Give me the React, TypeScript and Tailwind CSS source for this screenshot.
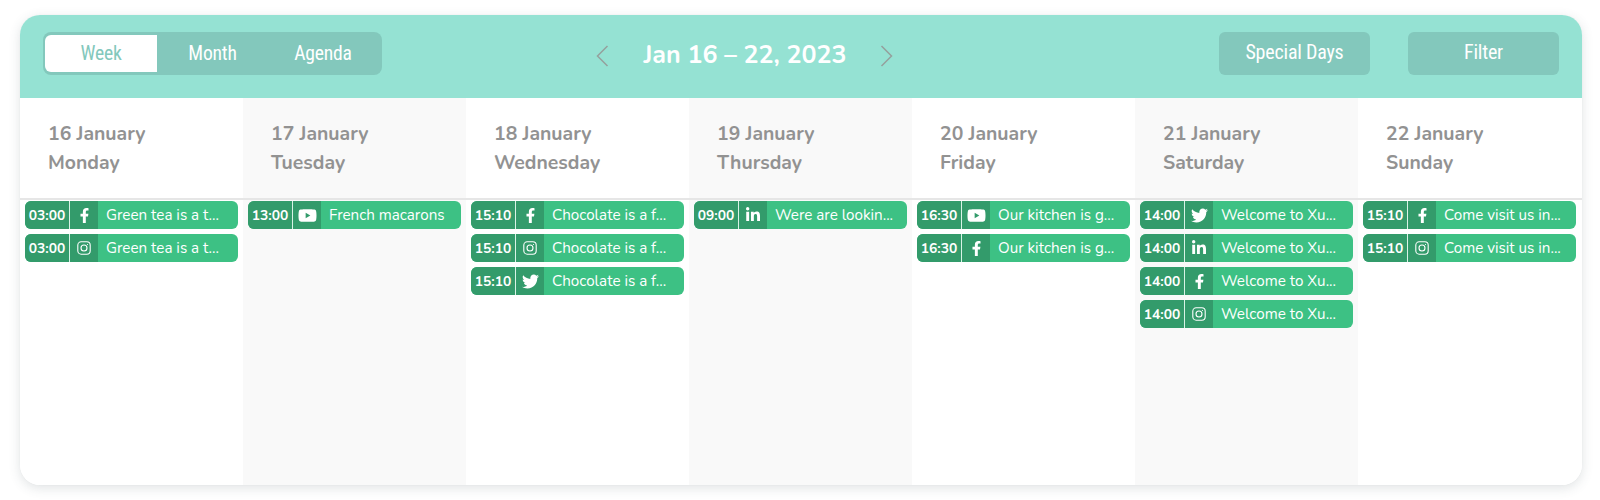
import { FaFacebookF, FaLinkedinIn, FaTwitter, FaYoutube } from "react-icons/fa";

type Network = "facebook" | "instagram" | "twitter" | "linkedin" | "youtube";

const Instagram = () => (
  <svg width="14" height="14" viewBox="0 0 14 14" fill="none" stroke="currentColor" strokeWidth="1.1">
    <rect x="0.8" y="0.8" width="12.4" height="12.4" rx="3.4" />
    <circle cx="7" cy="7" r="3" />
    <circle cx="10.5" cy="3.5" r="0.6" fill="currentColor" stroke="none" />
  </svg>
);

const icons = {
  facebook: <FaFacebookF size={15} />,
  instagram: <Instagram />,
  twitter: <FaTwitter size={17} />,
  linkedin: <FaLinkedinIn size={16} />,
  youtube: <FaYoutube size={19} />,
};

const days: {
  date: string;
  name: string;
  time: string;
  text: string;
  networks: Network[];
}[] = [
  { date: "16 January", name: "Monday", time: "03:00", text: "Green tea is a t...", networks: ["facebook", "instagram"] },
  { date: "17 January", name: "Tuesday", time: "13:00", text: "French macarons", networks: ["youtube"] },
  { date: "18 January", name: "Wednesday", time: "15:10", text: "Chocolate is a f...", networks: ["facebook", "instagram", "twitter"] },
  { date: "19 January", name: "Thursday", time: "09:00", text: "Were are lookin...", networks: ["linkedin"] },
  { date: "20 January", name: "Friday", time: "16:30", text: "Our kitchen is g...", networks: ["youtube", "facebook"] },
  { date: "21 January", name: "Saturday", time: "14:00", text: "Welcome to Xu...", networks: ["twitter", "linkedin", "facebook", "instagram"] },
  { date: "22 January", name: "Sunday", time: "15:10", text: "Come visit us in...", networks: ["facebook", "instagram"] },
];

const Event = ({ time, text, network }: { time: string; text: string; network: Network }) => (
  <div className="flex h-7 w-[213px] overflow-hidden rounded-md bg-[#3dc184] text-white">
    <div className="flex w-[44px] items-center justify-center bg-[#339b6b] pt-[1px] text-[13.8px] leading-7 font-bold">{time}</div>
    <div className="w-px bg-white/80" />
    <div className="flex w-[28px] items-center justify-center bg-[#339b6b]">{icons[network]}</div>
    <div className="flex-1 truncate pl-2 text-[15.2px] leading-7">{text}</div>
  </div>
);

const Chevron = ({ d }: { d: string }) => (
  <svg width="13" height="22" viewBox="0 0 13 22" fill="none" stroke="#95a09d" strokeWidth="1.5">
    <path d={d} />
  </svg>
);

const buttonFont = "font-['Roboto',sans-serif] [font-stretch:condensed] tracking-[-0.2px] text-white";

export default function App() {
  return (
    <div className="h-[500px] bg-white pt-[15px] pr-[18px] pl-5">
      <div className="flex h-[470px] flex-col overflow-hidden rounded-[20px] bg-white font-['Nunito','Lato','Noto_Sans',sans-serif] shadow-[0_3px_12px_rgba(60,80,90,0.16),0_0_1px_rgba(0,0,0,0.08)]">
        <div className="flex h-[83px] shrink-0 items-start bg-[#95e2d3] pt-[17px]">
          <div className={`ml-[23px] flex h-[43px] w-[339px] items-center rounded-lg bg-[#83c8bc] pl-[2px] text-[19.6px] ${buttonFont}`}>
            <div className="flex h-[37px] w-[112px] items-center justify-center rounded-l-md bg-white pt-[1px] text-[#83c8bc]">Week</div>
            <div className="flex w-[111px] items-center justify-center pt-[1px]">Month</div>
            <div className="flex w-[110px] items-center justify-center pt-[1px]">Agenda</div>
          </div>
          <div className="ml-[214px] flex h-[47px] items-center">
            <Chevron d="M11.5 1 1.5 11l10 10" />
            <div className="ml-[34px] mr-[33px] w-[204px] text-center text-[25px] font-bold whitespace-nowrap text-white">Jan 16 – 22, 2023</div>
            <Chevron d="M1.5 1l10 10-10 10" />
          </div>
          <div className={`ml-auto flex h-[43px] w-[151px] items-center justify-center rounded-md bg-[#83c8bc] pb-[3px] text-[20px] ${buttonFont}`}>Special Days</div>
          <div className={`ml-[38px] mr-[23px] flex h-[43px] w-[151px] items-center justify-center rounded-md bg-[#83c8bc] pb-[3px] text-[20px] ${buttonFont}`}>Filter</div>
        </div>
        <div className="grid flex-1 grid-cols-[repeat(6,223px)_1fr]">
          {days.map((day, i) => (
            <div key={day.date} className={i % 2 === 1 ? "bg-[#f9f9f9]" : "bg-white"}>
              <div className="flex h-[102px] flex-col border-b-2 border-[#e6e6e6] pt-[21px] pl-7 text-[19.4px] leading-[29px] font-bold text-[#929292]">
                <div>{day.date}</div>
                <div>{day.name}</div>
              </div>
              <div className="flex flex-col gap-[5px] pt-[1px] pl-[5px]">
                {day.networks.map((network) => (
                  <Event key={network} time={day.time} text={day.text} network={network} />
                ))}
              </div>
            </div>
          ))}
        </div>
      </div>
    </div>
  );
}
